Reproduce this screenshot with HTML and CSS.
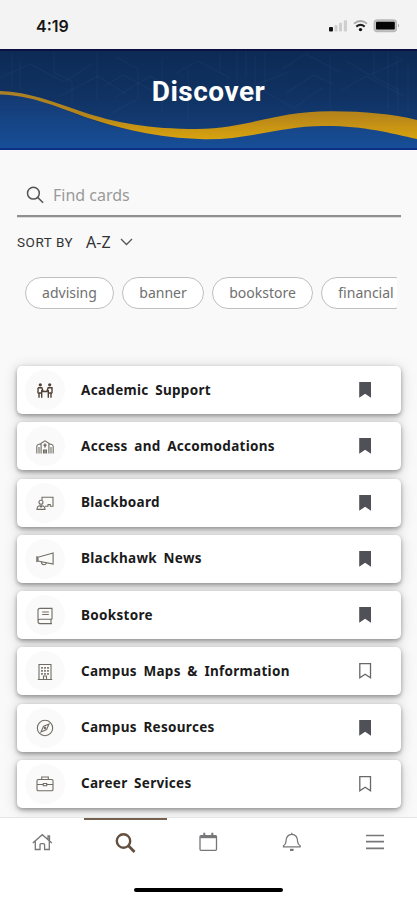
FILE: index.html
```html
<!DOCTYPE html>
<html lang="en">
<head>
<meta charset="utf-8">
<meta name="viewport" content="width=device-width, initial-scale=1">
<title>Discover</title>
<link rel="stylesheet" href="styles.css">
</head>
<body>
<svg class="defs" aria-hidden="true">
  <symbol id="mark-on" viewBox="0 0 14 18"><path d="M1.200 1h11.800v15.800l-5.900-4.100-5.900 4.100z" fill="#505156"/></symbol>
  <symbol id="mark-off" viewBox="0 0 14 18"><path d="M1.800 1.600h10.700v14.200l-5.350-3.500-5.350 3.500z" fill="none" stroke="#68686c" stroke-width="1.300"/></symbol>
</svg>
<div class="screen">
  <div class="status">
    <span class="time">4:19</span>
    <svg class="signals" viewBox="0 0 74 16" width="74" height="16">
      <rect x="1" y="9" width="4" height="4.500" rx="1" fill="#111"/>
      <g fill="#cfcfcf"><rect x="6.500" y="7" width="3" height="6.500" rx=".8"/><rect x="11" y="4.800" width="3" height="8.700" rx=".8"/><rect x="15.800" y="2.200" width="3.200" height="11.300" rx=".8"/></g>
      <g fill="none"><path d="M26 5.600q6.500-5.200 13 0" stroke="#a7a7a7" stroke-width="1.800"/><path d="M28.300 8.600q4.200-3.400 8.400 0" stroke="#222" stroke-width="2"/></g>
      <circle cx="32.500" cy="11.600" r="1.700" fill="#111"/>
      <rect x="46.300" y="2" width="22" height="11.400" rx="3" fill="#c6c6c6" stroke="#b8b8b8" stroke-width="1.500"/>
      <rect x="48" y="3.800" width="18.800" height="7.800" rx="1" fill="#050505"/>
      <path d="M70 5.800q2.400 1.900 0 3.800z" fill="#aaa"/>
    </svg>
  </div>
  <header class="hero">
    <svg class="wave" viewBox="0 0 417 101" preserveAspectRatio="none">
      <defs>
        <linearGradient id="sky" x2="0" y2="1"><stop offset="0" stop-color="#0d2a54"/><stop offset=".5" stop-color="#103364"/><stop offset="1" stop-color="#164383"/></linearGradient>
        <linearGradient id="sea" gradientUnits="userSpaceOnUse" x1="0" y1="42" x2="0" y2="101"><stop offset="0" stop-color="#14386f"/><stop offset="1" stop-color="#174f98"/></linearGradient>
        <linearGradient id="gold" gradientUnits="userSpaceOnUse" x1="0" y1="42" x2="0" y2="90"><stop offset="0" stop-color="#a88028"/><stop offset=".5" stop-color="#b68519"/><stop offset="1" stop-color="#d8a30f"/></linearGradient>
      </defs>
      <rect width="417" height="101" fill="url(#sky)"/>
      <g fill="none" stroke="#7c9bc2" stroke-opacity=".09" stroke-width=".8">
        <path d="M12 4v34M20 12v30M54 3v20l18 10v22M97 2v50M103 38l20-12 30 16M116 8l22 12v30l-26 14M162 10v54M188 20v52M220 4v18M237 0v34M246 0v28M255 8v28l32-12M265 3v34M286 44l28-18 20 10M330 5v55M346 12l24 14 32-15M374 2v26l24 12v22M388 0v60M397 7v42M408 15v48"/>
        <path d="M0 29l30-14 34 18 28-18M60 47l38-20 28 18M116 48l34-21 40 23M176 24l22-12 32 17M262 41l32 18 28-20M282 20l24-15 34 18M340 42l26-15 38 20"/>
      </g>
      <path d="M0 43C60 48 88 87 200 88C258 88 278 70 345 77C370 79 392 84 417 90V101H0z" fill="url(#sea)"/>
      <path d="M0 42C30 43 53 53 80 62C115 74 150 80 197 80C250 79 275 62 332 62.300C365 62.500 392 65 417 71V90C390 84 362 76.500 323 77C282 77 248 91 204 90.200C156 89 118 79 85 68C50 55 31 47 0 45.500z" fill="url(#gold)"/>
      <path d="M0 .8h417" stroke="#090d3f" stroke-width="2"/>
      <path d="M0 100h417" stroke="#0d2f85" stroke-width="2"/>
    </svg>
    <h1>Discover</h1>
  </header>
  <main>
    <div class="search">
      <svg width="18" height="18" viewBox="0 0 18 18" fill="none" stroke="#555" stroke-width="1.500"><circle cx="7.400" cy="7.200" r="5.900"/><path d="M11.600 11.400l5.500 5.300"/></svg>
      <span>Find cards</span>
    </div>
    <div class="sort"><span class="sort-label">SORT BY</span><span class="sort-value">A-Z</span>
      <svg width="13" height="8" viewBox="0 0 13 8" fill="none" stroke="#555" stroke-width="1.300"><path d="M1 1l5.500 5.500L12 1"/></svg>
    </div>
    <div class="chips"><span class="chip advising">advising</span><span class="chip banner">banner</span><span class="chip bookstore">bookstore</span><span class="chip financial">financial</span></div>
    <ul class="cards">
      <li><i><svg viewBox="0 0 18 18"><g fill="#4f4034" stroke="none"><circle cx="4.300" cy="2.800" r="1.600"/><circle cx="13.700" cy="2.800" r="1.600"/></g><path d="M2 5.800h3.800l1.400 3.700h3.600l1.400-3.700H16v5l-1 1v4M2 5.800v5l1 1v4M5.700 8v7.800M12.300 8v7.800M3 11h3M12 11h3" stroke="#4f4034" stroke-width="1.400"/></svg></i><b>Academic Support</b><svg class="mark"><use href="#mark-on"/></svg></li>
      <li><i><svg viewBox="0 0 18 18"><path d="M.8 15.500V8.400q0-1.700 2-2.100l2.300-.3v9.500M17.200 15.500V8.400q0-1.700-2-2.100L12.900 6v9.500M5.100 15.500V5.300L9 2.800l3.900 2.500v10.200M3 9v6.500M15 9v6.500M7.500 15.500V12h3v3.500"/><path d="M9 5.500v4M7.500 7.200h3M9 12v3.500" stroke-width="1.500"/></svg></i><b>Access and Accomodations</b><svg class="mark"><use href="#mark-on"/></svg></li>
      <li><i><svg viewBox="0 0 18 18"><path d="M6 6V3.300h11v9h-3M9 12.300h3v-1.800h2.200v1.800"/><circle cx="5" cy="8.300" r="2"/><path d="M1 15.400q.2-3.600 3-3.600h2q2.800 0 3 3.600zM4 12l1 1.200L6 12"/></svg></i><b>Blackboard</b><svg class="mark"><use href="#mark-on"/></svg></li>
      <li><i><svg viewBox="0 0 18 18"><path d="M17.100 3L2 7.200.8 6.800v4.600l1.200-.4 15.100 3zM2 7.200V11M5.300 11.800q.2 2.800 2.500 3 2.200 0 2.800-2.200"/></svg></i><b>Blackhawk News</b><svg class="mark"><use href="#mark-on"/></svg></li>
      <li><i><svg viewBox="0 0 18 18" class="book"><path d="M16 12.300V1.400H4Q2 1.400 2 3.400v11.200q0 2 2 2h12M4 12.300h12M15 12.300v4.300M2 14.200q0-1.900 2-1.900M6.200 5h6.600M6.200 7.500h6.600"/></svg></i><b>Bookstore</b><svg class="mark"><use href="#mark-on"/></svg></li>
      <li><i><svg viewBox="0 0 18 18"><path d="M3 16.500V1.500h12v15M1.800 16.500h14.400M7.500 16.500V13h3v3.500"/><path d="M6 4v8M9 4v8M12 4v8" stroke-dasharray="1.700 1.300" stroke-width="1.700"/></svg></i><b>Campus Maps &amp; Information</b><svg class="mark"><use href="#mark-off"/></svg></li>
      <li><i><svg viewBox="0 0 18 18"><circle cx="9" cy="9" r="7.700"/><path d="M13 5l-2.400 5.600L5 13l2.400-5.600z"/><circle cx="9" cy="9" r=".8" fill="#60594f"/></svg></i><b>Campus Resources</b><svg class="mark"><use href="#mark-on"/></svg></li>
      <li><i><svg viewBox="0 0 18 18"><rect x="1" y="4.500" width="16" height="11.300" rx="1.300"/><path d="M5.700 4.500V2h6.600v2.500M1 9.500h6.300M10.700 9.500H17M7.300 8.500h3.400v2.300H7.300z"/></svg></i><b>Career Services</b><svg class="mark"><use href="#mark-off"/></svg></li>
    </ul>
  </main>
  <footer>
    <nav>
      <a><svg viewBox="0 0 22 22"><path d="M.8 11l9.500-8.300 9.500 8.300M3.300 9.300v8.200H8v-4.700q0-1.200 1.200-1.200h2.200q1.200 0 1.200 1.200v4.700h4.700V9.300M16 7V4h1.500v4.500"/></svg></a>
      <a class="active"><svg viewBox="0 0 22 22"><circle cx="8.500" cy="9" r="6.700" stroke="#634e3f" stroke-width="2.400"/><path d="M13.500 13.800l6 6.100" stroke="#634e3f" stroke-width="2.800"/></svg></a>
      <a><svg viewBox="0 0 22 22"><rect x="2" y="3.600" width="16.500" height="14.700" rx="1"/><path d="M2.300 5h16" stroke-width="2.400"/><path d="M6.300 .8v3M14.300 .8v3" stroke-width="2"/></svg></a>
      <a><svg viewBox="0 0 22 22"><path d="M2.500 14.800h16.600v-1.100q-2.400-1.500-2.500-4.200Q16.400 2.300 10.800 2.300T5 9.500q-.1 2.700-2.500 4.200zM10.800 2.500V.8"/><path d="M9 17.900h3.600" stroke-width="2.200"/></svg></a>
      <a><svg viewBox="0 0 22 22"><path d="M2 3.500h18M2 9.700h18M2 16.300h18" stroke-width="1.700"/></svg></a>
    </nav>
    <div class="home-bar"></div>
  </footer>
</div>
</body>
</html>
```
FILE: styles.css
```css
* { box-sizing: border-box; }
body { margin: 0; font-family: "Noto Sans", sans-serif; background: #f9f9f9; }
.defs { position: absolute; width: 0; height: 0; }
.screen { width: 417px; height: 900px; display: flex; flex-direction: column; overflow: hidden; background: #f9f9f9; }
.status { height: 49px; flex: none; background: #f3f3f3; display: flex; justify-content: space-between; align-items: center; padding: 2px 15px 0 36px; }
.time { font: 600 16px/20px Inter, sans-serif; color: #161616; }
.signals { display: block; }
.hero { height: 101px; flex: none; display: grid; }
.hero > * { grid-area: 1 / 1; }
.wave { width: 417px; height: 101px; display: block; }
h1 { position: relative; margin: 0; padding-top: 27px; text-align: center; font: 700 28px/32px Roboto, sans-serif; letter-spacing: .5px; color: #fff; }
main { flex: 1; min-height: 0; overflow: hidden; padding: 25px 16px 0 17px; }
.search { height: 42px; border-bottom: 2px solid #8f8f8f; box-shadow: 0 1px 0 #dcdcdc; display: flex; align-items: center; gap: 9px; padding: 0 0 1px 9px; color: #999; font-size: 16px; }
.sort { height: 51px; display: flex; align-items: center; color: #333; font: 14px/20px Roboto, sans-serif; padding-bottom: 2px; }
.sort-label { width: 69px; font-size: 13.5px; letter-spacing: .55px; white-space: nowrap; }
.sort-value { width: 34px; font-family: "Noto Sans", sans-serif; font-size: 16px; }
.chips { display: flex; gap: 8px; height: 32px; margin: 9px 4px 0 8px; overflow: hidden; }
.chip { flex: none; height: 32px; border: 1px solid #bfbfbf; border-radius: 16px; background: #fff; text-align: center; color: #707070; font-size: 14px; line-height: 29px; }
.advising { width: 89px; }
.banner { width: 82px; }
.bookstore { width: 101px; }
.financial { width: 90px; }
.cards { list-style: none; margin: 57px 0 0; padding: 0; display: grid; grid-auto-rows: 48px; gap: 8.25px; }
.cards li { display: flex; align-items: center; background: #fff; border-radius: 5px; padding: 0 29px 0 8px; box-shadow: 0 2px 4px rgba(0,0,0,.34), 0 2px 14px rgba(0,0,0,.18); }
.cards i { width: 40px; height: 40px; border-radius: 50%; background: #fafafa; display: flex; align-items: center; justify-content: center; padding-top: 1px; }
.cards i svg { width: 18px; height: 18px; fill: none; stroke: #716d65; stroke-width: 1.1; }
.cards b { flex: 1; margin: -1px 0 0 16px; color: #1b1b1b; font-size: 13.5px; line-height: 20px; font-weight: 700; letter-spacing: .3px; word-spacing: 2.8px; white-space: nowrap; }
.mark { width: 14px; height: 18px; }
footer { height: 83px; flex: none; background: #fff; border-top: 1px solid #e5e5e5; position: relative; }
nav { display: grid; grid-template-columns: repeat(5, 1fr); height: 52px; padding-left: 1px; }
nav a { display: flex; justify-content: center; padding-top: 14px; }
nav .active { border-top: 2px solid #75614f; padding-top: 12px; }
nav svg { width: 22px; height: 22px; fill: none; stroke: #77777a; stroke-width: 1.3; }
.home-bar { width: 149px; height: 4px; border-radius: 2px; background: #000; margin: 18px auto 0; }
```
